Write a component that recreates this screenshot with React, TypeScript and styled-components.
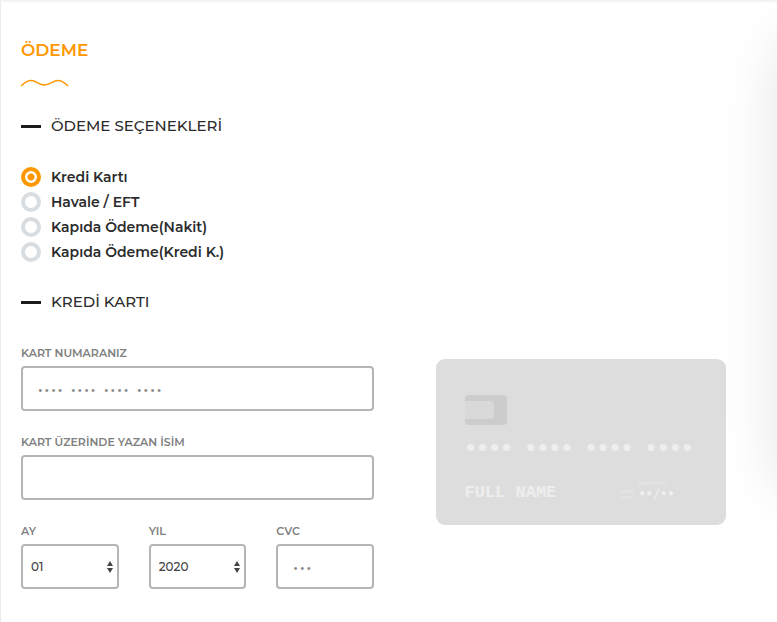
import React, { useState } from "react";
import styled, { createGlobalStyle } from "styled-components";

const GlobalStyle = createGlobalStyle`
  *, *::before, *::after { box-sizing: border-box; }
  body {
    margin: 0;
    background: #fff;
    color: #2b2b2b;
    font-family: Montserrat, Inter, sans-serif;
  }
`;

const Page = styled.main`
  position: relative;
  min-height: 100vh;
  padding: 36px 20px 33px;
  border-top: 2px solid #f3f3f3;
  border-left: 1px solid #ececec;
  overflow: hidden;
`;

const SideShadow = styled.div`
  position: absolute;
  top: 24px;
  left: 100%;
  width: 300px;
  height: 480px;
  border-radius: 60px;
  box-shadow: 0 0 60px rgba(0, 0, 0, 0.11);
  pointer-events: none;
`;

const Title = styled.h1`
  margin: 0;
  color: #ff9800;
  font-size: 17px;
  font-weight: 600;
  line-height: 24px;
`;

const Wave = styled.svg`
  display: block;
  margin-top: 16px;
`;

const Subtitle = styled.h2`
  display: flex;
  align-items: center;
  gap: 10px;
  margin: 28px 0;
  font-size: 15px;
  font-weight: 500;
  line-height: 20px;

  &::before {
    content: "";
    width: 20px;
    height: 3px;
    background: #1c1c1c;
  }
`;

const OptionList = styled.fieldset`
  display: flex;
  flex-direction: column;
  align-items: flex-start;
  margin: 0;
  padding: 0;
  border: 0;
`;

const Option = styled.label`
  display: flex;
  align-items: center;
  gap: 10px;
  height: 25px;
  font-size: 14px;
  font-weight: 600;
  cursor: pointer;
`;

const Radio = styled.input`
  appearance: none;
  width: 20px;
  height: 20px;
  margin: 0;
  border: 4px solid #d8dde1;
  border-radius: 50%;
  background: #fff;

  &:checked {
    border-color: #ff9800;
    background: radial-gradient(circle, #ff9800 0 3px, #fff 4px);
  }
`;

const Columns = styled.div`
  display: grid;
  grid-template-columns: 1fr 1fr;
  gap: 30px;
  align-items: start;
  margin-top: 34px;
`;

const Form = styled.form`
  display: flex;
  flex-direction: column;
  gap: 24px;
`;

const FieldRow = styled.div`
  display: grid;
  grid-template-columns: repeat(3, 1fr);
  gap: 30px;
`;

const Field = styled.div`
  display: flex;
  flex-direction: column;
  gap: 5px;
  min-width: 0;
`;

const Label = styled.label`
  color: #808080;
  font-size: 11px;
  font-weight: 600;
  line-height: 15px;
`;

const TextInput = styled.input`
  width: 100%;
  height: 45px;
  padding: 0 14px;
  border: 2px solid #b5b5b5;
  border-radius: 4px;
  background: #fff;
  color: #444;
  font: 500 13px Montserrat, Inter, sans-serif;

  &::placeholder {
    color: #8c8c8c;
    font: 11px "Liberation Mono", monospace;
  }
`;

const SelectBox = styled.div`
  position: relative;
`;

const Select = styled.select`
  appearance: none;
  display: block;
  width: 100%;
  height: 45px;
  padding: 0 20px 0 8px;
  border: 2px solid #b5b5b5;
  border-radius: 4px;
  background: #fff;
  color: #444;
  font: 500 12px Montserrat, Inter, sans-serif;
`;

const Arrows = styled.svg`
  position: absolute;
  top: 17px;
  right: 5px;
  pointer-events: none;
`;

const CardArea = styled.div`
  display: flex;
  justify-content: center;
  padding-top: 13px;
`;

const Card = styled.div`
  display: flex;
  flex-direction: column;
  width: 290px;
  padding: 36px 29px 23px;
  border-radius: 9px;
  background: #ddd;
  color: #eee;
`;

const Chip = styled.div`
  width: 42px;
  height: 30px;
  padding: 6px 0;
  border-radius: 4px;
  background: #ccc;

  &::before {
    content: "";
    display: block;
    width: 29px;
    height: 18px;
    border-radius: 0 4px 4px 0;
    background: #d9d9d9;
  }
`;

const CardNumber = styled.div`
  margin-top: 11px;
  font: bold 20px/24px "DejaVu Sans Mono", monospace;
  white-space: pre;
`;

const CardFooter = styled.div`
  display: flex;
  align-items: flex-end;
  justify-content: space-between;
  margin-top: 20px;
  padding-right: 22px;
`;

const Holder = styled.div`
  font: bold 17px/18px Courier, "Courier New", "Liberation Mono", monospace;
  text-transform: uppercase;
`;

const Expiry = styled.div`
  display: grid;
  grid-template-columns: auto auto;
  column-gap: 5px;
  align-items: center;
  color: #e6e6e6;
  font: bold 6px/6px "Liberation Sans", sans-serif;
`;

const ExpiryCaption = styled.span`
  grid-column: 2;
`;

const ExpiryHint = styled.span`
  text-align: right;
`;

const ExpiryValue = styled.span`
  color: #eee;
  font: bold 12px/16px "DejaVu Sans Mono", monospace;
`;

const paymentOptions = [
  "Kredi Kartı",
  "Havale / EFT",
  "Kapıda Ödeme(Nakit)",
  "Kapıda Ödeme(Kredi K.)",
];

const months = Array.from({ length: 12 }, (_, i) => String(i + 1).padStart(2, "0"));
const years = Array.from({ length: 11 }, (_, i) => String(2020 + i));

function SelectField({ id, label, values }: { id: string; label: string; values: string[] }) {
  return (
    <Field>
      <Label htmlFor={id}>{label}</Label>
      <SelectBox>
        <Select id={id}>
          {values.map((value) => (
            <option key={value}>{value}</option>
          ))}
        </Select>
        <Arrows width="8" height="12" viewBox="0 0 8 12" fill="#444" aria-hidden="true">
          <path d="M4 0 7 5H1zM4 12 1 7h6z" />
        </Arrows>
      </SelectBox>
    </Field>
  );
}

export default function App() {
  const [method, setMethod] = useState(paymentOptions[0]);

  return (
    <>
      <GlobalStyle />
      <Page>
        <SideShadow />
        <Title>ÖDEME</Title>
        <Wave width="48" height="10" viewBox="0 0 48 10" fill="none" aria-hidden="true">
          <path
            d="M0 8C4 4 7 2.500 10.500 2.500C15 2.500 18 7 23.500 7C29 7 32 2.500 37 2.500C40.500 2.500 43 4 47 8"
            stroke="#ff9800"
            strokeWidth="1.500"
          />
        </Wave>
        <Subtitle>ÖDEME SEÇENEKLERİ</Subtitle>
        <OptionList aria-label="Ödeme seçenekleri">
          {paymentOptions.map((option) => (
            <Option key={option}>
              <Radio
                type="radio"
                name="method"
                checked={method === option}
                onChange={() => setMethod(option)}
              />
              {option}
            </Option>
          ))}
        </OptionList>
        <Subtitle>KREDİ KARTI</Subtitle>
        <Columns>
          <Form>
            <Field>
              <Label htmlFor="number">KART NUMARANIZ</Label>
              <TextInput id="number" placeholder="•••• •••• •••• ••••" />
            </Field>
            <Field>
              <Label htmlFor="name">KART ÜZERİNDE YAZAN İSİM</Label>
              <TextInput id="name" />
            </Field>
            <FieldRow>
              <SelectField id="month" label="AY" values={months} />
              <SelectField id="year" label="YIL" values={years} />
              <Field>
                <Label htmlFor="cvc">CVC</Label>
                <TextInput id="cvc" placeholder="•••" />
              </Field>
            </FieldRow>
          </Form>
          <CardArea>
            <Card>
              <Chip />
              <CardNumber>•••• •••• •••• ••••</CardNumber>
              <CardFooter>
                <Holder>Full Name</Holder>
                <Expiry>
                  <ExpiryCaption>MM/YYYY</ExpiryCaption>
                  <ExpiryHint>
                    valid
                    <br />
                    date
                  </ExpiryHint>
                  <ExpiryValue>••/••</ExpiryValue>
                </Expiry>
              </CardFooter>
            </Card>
          </CardArea>
        </Columns>
      </Page>
    </>
  );
}
